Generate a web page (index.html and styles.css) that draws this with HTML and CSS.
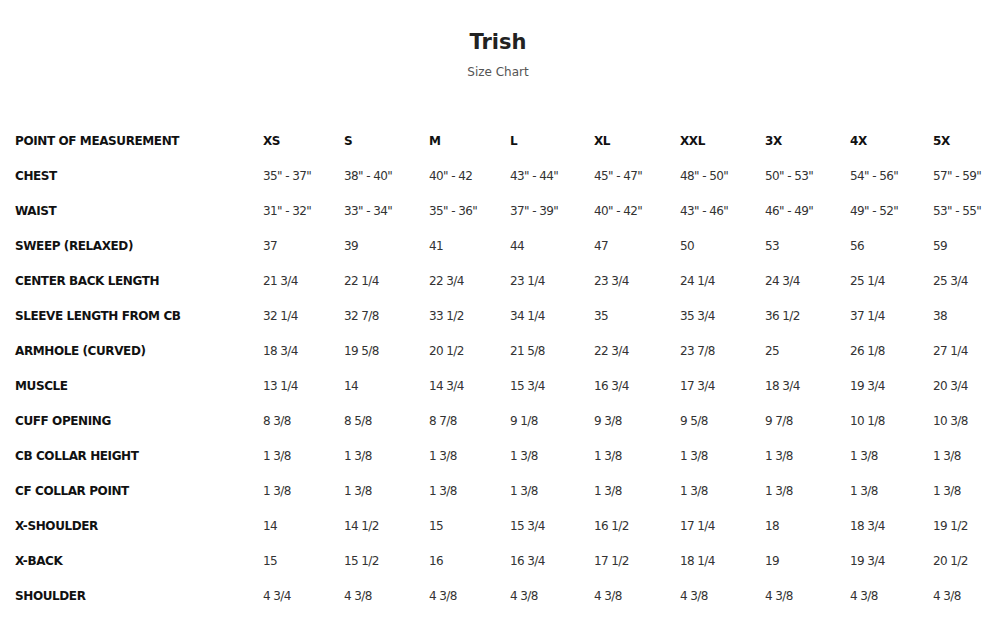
FILE: index.html
```html
<!DOCTYPE html>
<html>
<head>
<meta charset="utf-8">
<link rel="stylesheet" href="styles.css">
</head>
<body>
<header class="head">
  <h1 class="title">Trish</h1>
  <p class="subtitle">Size Chart</p>
</header>
<table class="chart">
  <colgroup>
    <col class="c-label"><col class="c81"><col class="c85"><col class="c81"><col class="c84"><col class="c86"><col class="c85"><col class="c85"><col class="c83"><col>
  </colgroup>
  <thead>
    <tr><th>POINT OF MEASUREMENT</th><th>XS</th><th>S</th><th>M</th><th>L</th><th>XL</th><th>XXL</th><th>3X</th><th>4X</th><th>5X</th></tr>
  </thead>
  <tbody>
    <tr><th>CHEST</th><td>35" - 37"</td><td>38" - 40"</td><td>40" - 42</td><td>43" - 44"</td><td>45" - 47"</td><td>48" - 50"</td><td>50" - 53"</td><td>54" - 56"</td><td>57" - 59"</td></tr>
    <tr><th>WAIST</th><td>31" - 32"</td><td>33" - 34"</td><td>35" - 36"</td><td>37" - 39"</td><td>40" - 42"</td><td>43" - 46"</td><td>46" - 49"</td><td>49" - 52"</td><td>53" - 55"</td></tr>
    <tr><th>SWEEP (RELAXED)</th><td>37</td><td>39</td><td>41</td><td>44</td><td>47</td><td>50</td><td>53</td><td>56</td><td>59</td></tr>
    <tr><th>CENTER BACK LENGTH</th><td>21 3/4</td><td>22 1/4</td><td>22 3/4</td><td>23 1/4</td><td>23 3/4</td><td>24 1/4</td><td>24 3/4</td><td>25 1/4</td><td>25 3/4</td></tr>
    <tr><th>SLEEVE LENGTH FROM CB</th><td>32 1/4</td><td>32 7/8</td><td>33 1/2</td><td>34 1/4</td><td>35</td><td>35 3/4</td><td>36 1/2</td><td>37 1/4</td><td>38</td></tr>
    <tr><th>ARMHOLE (CURVED)</th><td>18 3/4</td><td>19 5/8</td><td>20 1/2</td><td>21 5/8</td><td>22 3/4</td><td>23 7/8</td><td>25</td><td>26 1/8</td><td>27 1/4</td></tr>
    <tr><th>MUSCLE</th><td>13 1/4</td><td>14</td><td>14 3/4</td><td>15 3/4</td><td>16 3/4</td><td>17 3/4</td><td>18 3/4</td><td>19 3/4</td><td>20 3/4</td></tr>
    <tr><th>CUFF OPENING</th><td>8 3/8</td><td>8 5/8</td><td>8 7/8</td><td>9 1/8</td><td>9 3/8</td><td>9 5/8</td><td>9 7/8</td><td>10 1/8</td><td>10 3/8</td></tr>
    <tr><th>CB COLLAR HEIGHT</th><td>1 3/8</td><td>1 3/8</td><td>1 3/8</td><td>1 3/8</td><td>1 3/8</td><td>1 3/8</td><td>1 3/8</td><td>1 3/8</td><td>1 3/8</td></tr>
    <tr><th>CF COLLAR POINT</th><td>1 3/8</td><td>1 3/8</td><td>1 3/8</td><td>1 3/8</td><td>1 3/8</td><td>1 3/8</td><td>1 3/8</td><td>1 3/8</td><td>1 3/8</td></tr>
    <tr><th>X-SHOULDER</th><td>14</td><td>14 1/2</td><td>15</td><td>15 3/4</td><td>16 1/2</td><td>17 1/4</td><td>18</td><td>18 3/4</td><td>19 1/2</td></tr>
    <tr><th>X-BACK</th><td>15</td><td>15 1/2</td><td>16</td><td>16 3/4</td><td>17 1/2</td><td>18 1/4</td><td>19</td><td>19 3/4</td><td>20 1/2</td></tr>
    <tr><th>SHOULDER</th><td>4 3/4</td><td>4 3/8</td><td>4 3/8</td><td>4 3/8</td><td>4 3/8</td><td>4 3/8</td><td>4 3/8</td><td>4 3/8</td><td>4 3/8</td></tr>
  </tbody>
</table>
</body>
</html>
```
FILE: styles.css
```css
html, body {
  margin: 0;
  padding: 0;
  background: #ffffff;
}
body {
  font-family: "DejaVu Sans", "Noto Sans", sans-serif;
  color: #222222;
}
.head {
  text-align: center;
  padding-top: 28px;
}
.title {
  margin: 0;
  font-size: 21px;
  line-height: 28px;
  font-weight: 700;
  color: #222222;
}
.subtitle {
  margin: 6px 0 0;
  font-size: 12px;
  line-height: 20px;
  color: #555555;
}
.chart {
  margin: 41px 0 0 15px;
  border-collapse: collapse;
  table-layout: fixed;
  width: 966px;
}
.c-label { width: 248px; }
.c81 { width: 81px; }
.c83 { width: 83px; }
.c84 { width: 84px; }
.c85 { width: 85px; }
.c86 { width: 86px; }
.chart th, .chart td {
  height: 35px;
  padding: 0;
  text-align: left;
  vertical-align: middle;
  font-size: 12px;
  letter-spacing: -0.4px;
  white-space: nowrap;
}
.chart th {
  font-weight: 700;
  color: #111111;
}
.chart td {
  font-weight: 400;
  color: #333333;
  letter-spacing: -0.6px;
}
```
